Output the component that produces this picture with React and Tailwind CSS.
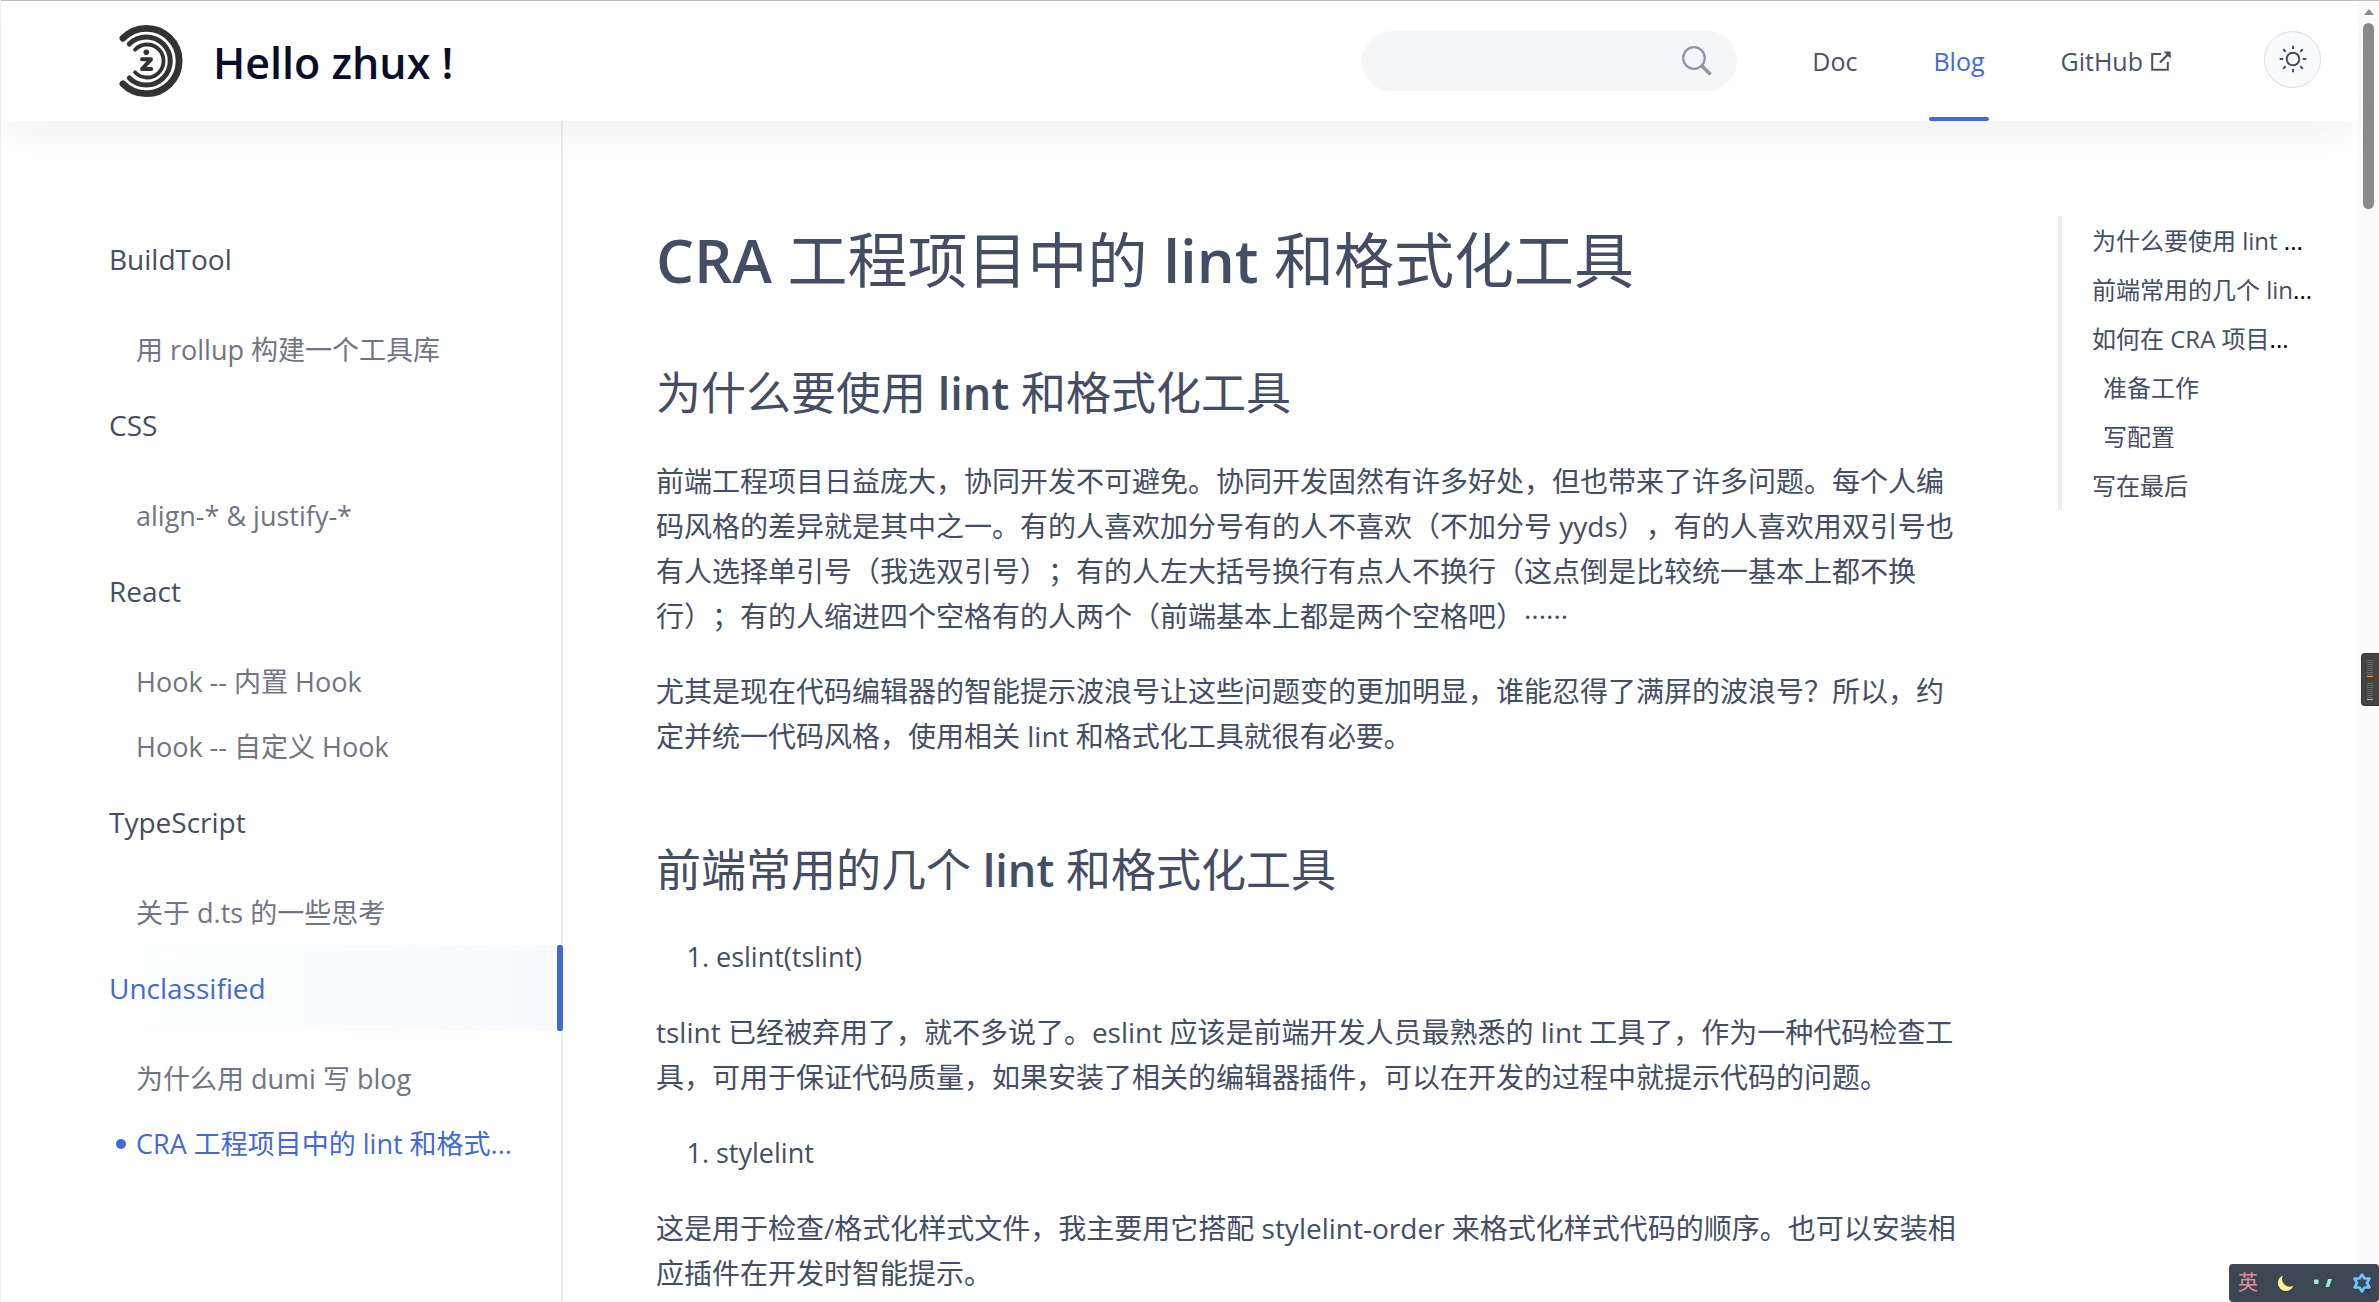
const sections = [
  { title: "BuildTool", items: ["用 rollup 构建一个工具库"] },
  { title: "CSS", items: ["align-* & justify-*"] },
  { title: "React", items: ["Hook -- 内置 Hook", "Hook -- 自定义 Hook"] },
  { title: "TypeScript", items: ["关于 d.ts 的一些思考"] },
  {
    title: "Unclassified",
    active: true,
    items: ["为什么用 dumi 写 blog", "CRA 工程项目中的 lint 和格式..."],
    current: 1,
  },
];

const toc = [
  { text: "为什么要使用 lint ", cut: true },
  { text: "前端常用的几个 lin", cut: true },
  { text: "如何在 CRA 项目", cut: true },
  { text: "准备工作", sub: true },
  { text: "写配置", sub: true },
  { text: "写在最后" },
];

const meterBars = [0, 1, 2, 3, 4, 5, 6, 7];

function Logo() {
  return (
    <svg viewBox="0 0 64 74" className="h-[74px] w-16 shrink-0" fill="none" stroke="#333" strokeLinecap="round" aria-hidden="true">
      <path d="M4 14.200A32.700 32.700 0 1 1 4 59.800" strokeWidth="6.800" />
      <path d="M10.300 20A24 24 0 1 1 10.300 54" strokeWidth="5" />
      <path d="M16 25.700A16.500 16.500 0 1 1 16 48.300" strokeWidth="3.800" />
      <circle cx="27.300" cy="28.300" r="2.800" fill="#333" stroke="none" />
      <path d="M23 35.300H32L23 45H32.200" strokeWidth="4" strokeLinejoin="round" />
    </svg>
  );
}

function SearchIcon() {
  return (
    <svg viewBox="0 0 32 32" className="size-8" fill="none" stroke="#9094a6" aria-hidden="true">
      <circle cx="13" cy="13" r="10.800" strokeWidth="2.200" />
      <path d="M20.500 20.500L29.500 29.500" strokeWidth="3.400" />
    </svg>
  );
}

function ExternalIcon() {
  return (
    <svg viewBox="0 0 20 20" className="size-5" fill="none" stroke="currentColor" strokeWidth="2" aria-hidden="true">
      <path d="M10 3H1.200V18.700H16.800V11" />
      <path d="M9 11.500L17 3.500" strokeWidth="2.400" />
      <path d="M12.500 0.500H19.700V7.700Z" fill="currentColor" stroke="none" />
    </svg>
  );
}

function SunIcon() {
  return (
    <svg viewBox="0 0 28 28" className="size-7" fill="none" stroke="#454d64" strokeWidth="2" aria-hidden="true">
      <circle cx="14" cy="14" r="6.300" />
      <path d="M14 0.700V4M14 24V27.300M0.700 14H4.300M23.700 14H27.300M4.200 4.200L6.700 6.700M21.300 21.300L23.800 23.800M4.200 23.800L6.700 21.300M21.300 6.700L23.800 4.200" />
    </svg>
  );
}

function Header() {
  return (
    <header className="relative z-10 flex h-[121px] items-center border-t border-[#bbb] bg-white pr-[37px] pl-[118px] shadow-[0_14px_42px_-4px_rgba(0,0,0,0.06)]">
      <a href="#" className="flex items-center gap-[30px]">
        <Logo />
        <span className="pt-1 text-[43px] leading-[60px] font-semibold text-[#080e29]">Hello zhux !</span>
      </a>
      <label className="mr-[75px] ml-auto flex h-[60px] w-[375px] items-center rounded-full bg-[#f4f6f8] pr-6 pl-8">
        <input type="text" aria-label="Search" className="min-w-0 flex-1 bg-transparent text-[25px] outline-none" />
        <SearchIcon />
      </label>
      <nav className="flex h-full gap-[76px] text-[25px] leading-[120px] text-[#4d5164]">
        <a href="#">Doc</a>
        <a href="#" className="relative text-[#4569d4]">
          Blog
          <span className="absolute -inset-x-1 bottom-0 h-1 rounded-xs bg-[#4569d4]" />
        </a>
        <a href="#" className="flex items-center gap-2">
          GitHub
          <ExternalIcon />
        </a>
      </nav>
      <button
        type="button"
        aria-label="Switch theme"
        className="mb-1 ml-[93px] flex size-[57px] items-center justify-center rounded-full border border-[#dadde3] bg-[#f9fafc]"
      >
        <SunIcon />
      </button>
    </header>
  );
}

function Sidebar() {
  return (
    <nav aria-label="Blog posts" className="w-[562px] shrink-0 border-r-2 border-[#ebedf1] pt-[95px]">
      {sections.map((s) => (
        <section key={s.title}>
          <a
            href="#"
            className={
              s.active
                ? "-mr-[2px] flex h-[86px] bg-linear-to-r from-white to-[#f8faff] pl-[108px] text-[28px] leading-[86px] text-[#4569d4]"
                : "flex h-[86px] pl-[108px] text-[28px] leading-[86px] text-[#454d64]"
            }
          >
            {s.title}
            {s.active && <span className="ml-auto w-[6px] rounded-xs bg-[#4569d4]" />}
          </a>
          <ul className="pt-[15px]">
            {s.items.map((t, i) => (
              <li key={t} className="h-[65px] pl-[115px] text-[27px] leading-[65px]">
                <a
                  href="#"
                  className={
                    s.current === i
                      ? "flex items-center gap-[10px] text-[#4569d4]"
                      : "flex items-center pl-5 text-[#717484]"
                  }
                >
                  {s.current === i && <span className="size-[10px] shrink-0 rounded-full bg-[#4569d4]" />}
                  {t}
                </a>
              </li>
            ))}
          </ul>
        </section>
      ))}
    </nav>
  );
}

function En({ children }) {
  return <span className="font-semibold">{children}</span>;
}

function Article() {
  return (
    <article className="min-w-0 flex-1 pt-[94px] pr-[97px] pl-[93px] text-[28px] leading-[45px] text-[#454d64] [text-spacing-trim:space-all]">
      <h1 className="mb-[54px] text-[60px] leading-[90px]">
        <En>CRA</En> 工程项目中的 <En>lint</En> 和格式化工具
      </h1>
      <h2 className="mb-8 text-[45px] leading-[68px]">
        为什么要使用 <En>lint</En> 和格式化工具
      </h2>
      <p className="mb-[30px]">
        前端工程项目日益庞大，协同开发不可避免。协同开发固然有许多好处，但也带来了许多问题。每个人编码风格的差异就是其中之一。有的人喜欢加分号有的人不喜欢（不加分号
        yyds），有的人喜欢用双引号也有人选择单引号（我选双引号）；有的人左大括号换行有点人不换行（这点倒是比较统一基本上都不换行）；有的人缩进四个空格有的人两个（前端基本上都是两个空格吧）······
      </p>
      <p className="mb-[77px]">
        尤其是现在代码编辑器的智能提示波浪号让这些问题变的更加明显，谁能忍得了满屏的波浪号？所以，约定并统一代码风格，使用相关 lint
        和格式化工具就很有必要。
      </p>
      <h2 className="mb-[30px] text-[45px] leading-[68px]">
        前端常用的几个 <En>lint</En> 和格式化工具
      </h2>
      <ol className="mb-[31px] list-decimal pl-[60px] text-[27px]">
        <li>eslint(tslint)</li>
      </ol>
      <p className="mb-[30px]">
        tslint 已经被弃用了，就不多说了。eslint 应该是前端开发人员最熟悉的 lint
        工具了，作为一种代码检查工具，可用于保证代码质量，如果安装了相关的编辑器插件，可以在开发的过程中就提示代码的问题。
      </p>
      <ol className="mb-[31px] list-decimal pl-[60px] text-[27px]">
        <li>stylelint</li>
      </ol>
      <p>
        这是用于检查/格式化样式文件，我主要用它搭配 stylelint-order
        来格式化样式代码的顺序。也可以安装相应插件在开发时智能提示。
      </p>
    </article>
  );
}

function Toc() {
  return (
    <aside className="mr-11 w-64 shrink-0 pt-[95px]">
      <ul className="border-l-4 border-[#ebedf1] pl-[30px] text-2xl leading-[49px] whitespace-nowrap text-black">
        {toc.map((t) => (
          <li key={t.text} className={t.sub ? "pl-[11px]" : ""}>
            <a href="#" className="text-[#454d64]">
              {t.text}
            </a>
            {t.cut && "..."}
          </li>
        ))}
      </ul>
    </aside>
  );
}

function ScrollTrack() {
  return (
    <div className="flex w-[21px] shrink-0 flex-col items-center border-t border-[#bbb] bg-[#fcfcfc] pt-2">
      <svg viewBox="0 0 10 6" className="h-[6px] w-[10px]" aria-hidden="true">
        <path d="M5 0L10 6H0Z" fill="#8b8b8b" />
      </svg>
      <div className="mt-2 h-[186px] w-[11px] rounded-full bg-[#8b8b8b]" />
    </div>
  );
}

function Meter() {
  return (
    <div className="fixed top-[653px] right-0 z-20 flex h-[53px] w-[18px] flex-col justify-center gap-[6px] rounded-l-sm border border-r-0 border-[#333] bg-[#444] pl-[5px]">
      {["bg-[#f9a11b]", "bg-[#8fe12c]"].map((tone) => (
        <div key={tone} className="flex flex-col gap-px">
          {meterBars.map((b) => (
            <span key={b} className="h-px w-[6px] bg-[#666]" />
          ))}
          <span className={`h-px w-[6px] ${tone}`} />
        </div>
      ))}
    </div>
  );
}

function ImeBar() {
  return (
    <div className="fixed right-0 bottom-0 z-20 flex h-[38px] w-[150px] items-center rounded-sm bg-[#3d4653] pl-[9px]">
      <span className="text-[20px] leading-[38px] text-[#ea8ba4]">英</span>
      <svg viewBox="0 0 16 16" className="ml-5 size-4" aria-hidden="true">
        <path d="M5 0.500A8 8 0 1 0 15.500 10.500A7.500 7.500 0 0 1 5 0.500Z" fill="#fbf596" />
      </svg>
      <svg viewBox="0 0 18 10" className="ml-5 h-[10px] w-[18px]" fill="#8ff5d2" aria-hidden="true">
        <rect x="0" y="1.500" width="4.500" height="4.500" rx="0.800" />
        <path d="M14 1H18L15 9H11.500Z" />
      </svg>
      <svg viewBox="0 0 20 20" className="ml-5 size-5" aria-hidden="true">
        <path
          d="M10 1.500L12.500 5.500H17.500L15 10L17.500 14.500H12.500L10 18.500L7.500 14.500H2.500L5 10L2.500 5.500H7.500Z"
          fill="none"
          stroke="#6fc6ff"
          strokeWidth="2.600"
          strokeLinejoin="round"
        />
        <path d="M12 16H20L16 19.500Z" fill="#2d3440" />
      </svg>
    </div>
  );
}

export default function App() {
  return (
    <div className="flex min-h-screen bg-white font-['Open_Sans','Noto_Sans_CJK_SC',sans-serif]">
      <div className="flex min-w-0 flex-1 flex-col border-l border-[#f2f2f2]">
        <Header />
        <div className="flex flex-1">
          <Sidebar />
          <Article />
          <Toc />
        </div>
      </div>
      <ScrollTrack />
      <Meter />
      <ImeBar />
    </div>
  );
}
